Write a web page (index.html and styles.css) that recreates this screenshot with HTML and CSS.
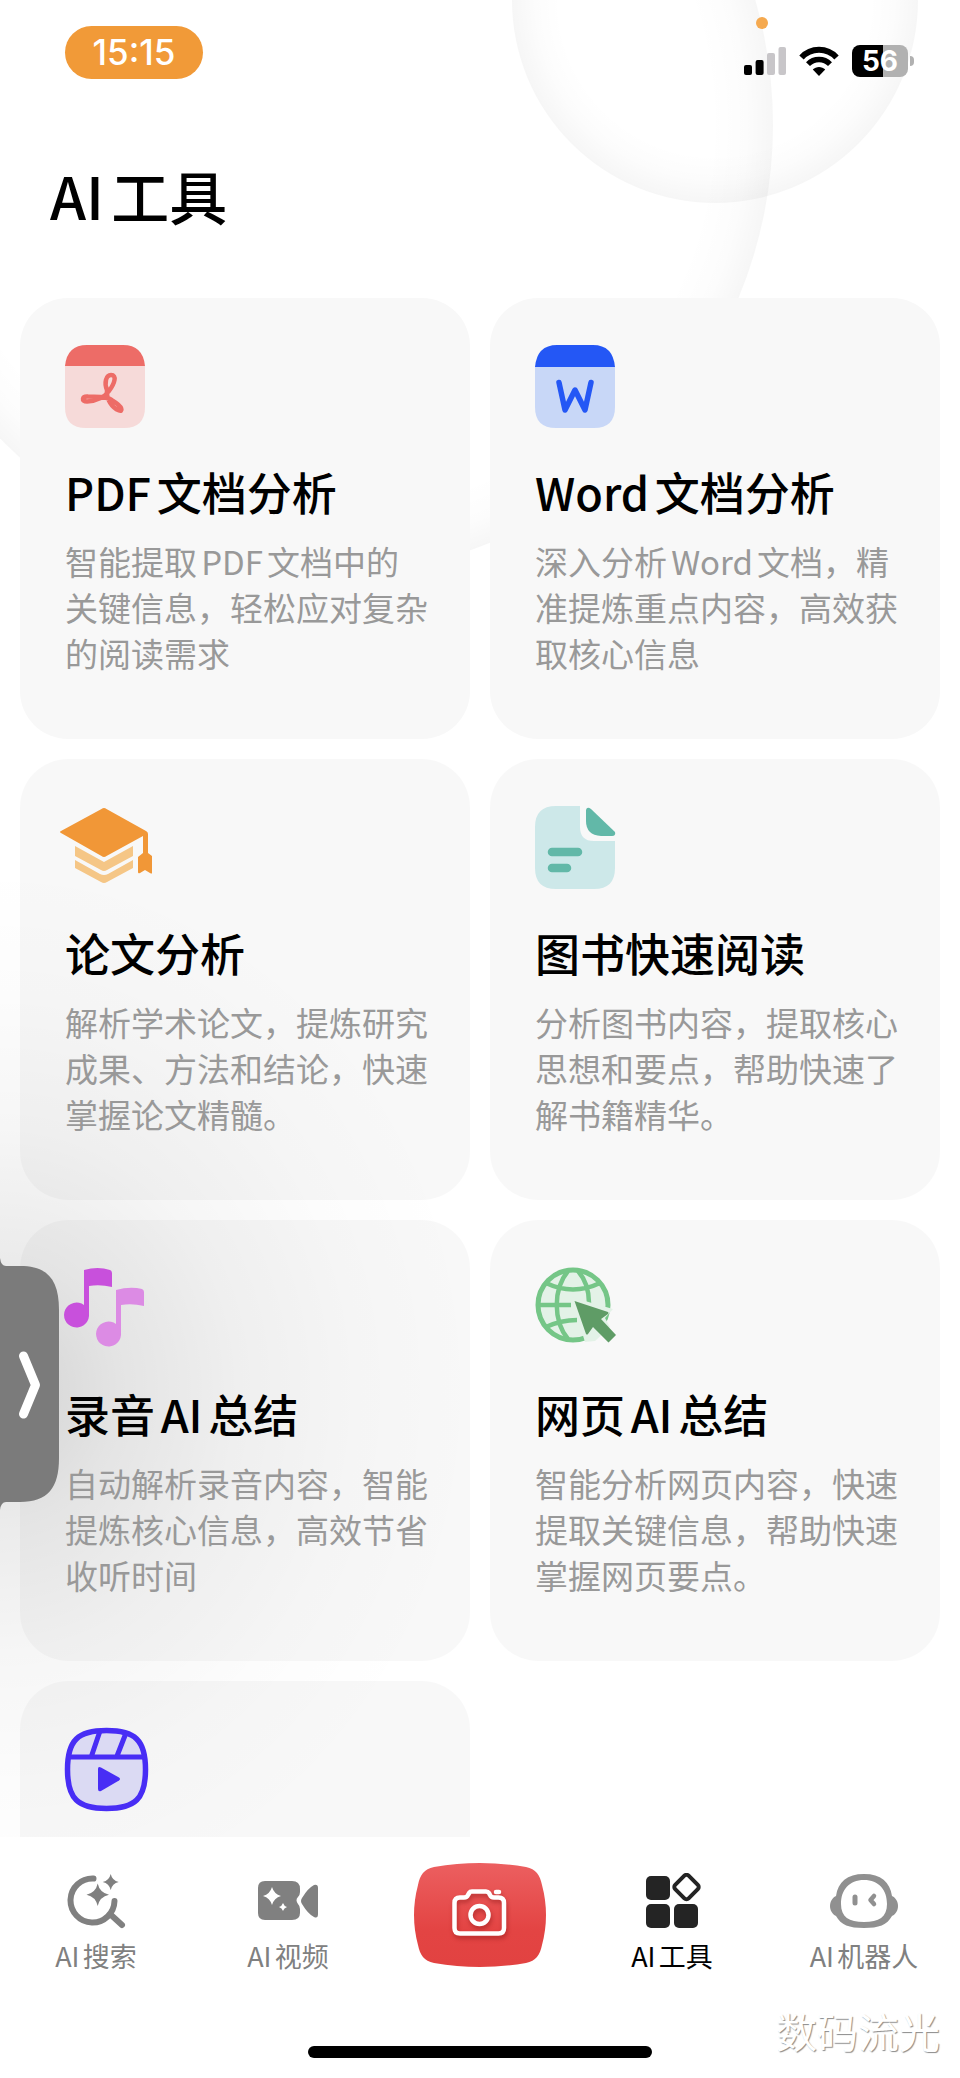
FILE: index.html
```html
<!DOCTYPE html>
<html lang="zh-CN">
<head>
<meta charset="utf-8">
<meta name="viewport" content="width=device-width, initial-scale=1">
<title>AI工具</title>
<link rel="stylesheet" href="styles.css">
</head>
<body>
<div class="app">
  <div class="orb orb-large"></div>
  <div class="orb orb-small"></div>
  <div class="glow"></div>

  <header class="header">
    <div class="status">
      <time class="clock">15:15</time>
      <div class="indicators">
        <span class="mic-dot"></span>
        <svg class="signal" width="42" height="28" viewBox="0 0 42 28" aria-hidden="true">
          <rect x="0" y="18" width="8" height="10" rx="2"/>
          <rect x="11.600" y="13" width="8" height="15" rx="2"/>
          <rect x="23" y="6" width="8" height="22" rx="2" fill="#c8c6c9"/>
          <rect x="34.500" y="0" width="7.500" height="28" rx="2" fill="#c8c6c9"/>
        </svg>
        <svg class="wifi" width="40" height="30" viewBox="0 0 40 30" aria-hidden="true">
          <path d="M2.500 11.500C12 1.200 28 1.200 37.500 11.500" fill="none" stroke="#000" stroke-width="6"/>
          <path d="M9 18.200C15 12 25 12 31 18.200" fill="none" stroke="#000" stroke-width="5.500"/>
          <path d="M13.800 23.500C17 20 23 20 26.200 23.500L20 30Z"/>
        </svg>
        <span class="battery">56</span>
      </div>
    </div>
    <h1 class="title">AI工具</h1>
  </header>

  <main class="tools">
    <a class="card" href="#">
      <svg class="icon" viewBox="0 0 84 84" aria-hidden="true">
        <path d="M0 21H80V62Q80 83 59 83H21Q0 83 0 62Z" fill="#f6dad9"/>
        <path d="M0 21Q2 0 22 0H58Q78 0 80 21Z" fill="#ed6c67"/>
        <path d="M42 45C39 38 41 30 46 30C52 30 50 38 44 46C39 53 30 56 22 56.500C16 56.500 17 51 23 51.500C33 52 43 51 48 56C58 62 58 67 54 65.500C47 63 41 54 42 45Z" fill="none" stroke="#ed6c67" stroke-width="4.500" stroke-linejoin="round"/>
      </svg>
      <h2 class="card-title">PDF文档分析</h2>
      <p class="card-text">智能提取PDF文档中的关键信息，轻松应对复杂的阅读需求</p>
    </a>
    <a class="card" href="#">
      <svg class="icon" viewBox="0 0 84 84" aria-hidden="true">
        <path d="M0 21H80V62Q80 83 59 83H21Q0 83 0 62Z" fill="#c8d7f7"/>
        <path d="M0 22Q2 0 22 0H58Q78 0 80 22Z" fill="#2457f5"/>
        <path d="M24 37.500L30 65L40 45L50 65L56 37.500" fill="none" stroke="#2457f5" stroke-width="5.500" stroke-linecap="round" stroke-linejoin="round"/>
      </svg>
      <h2 class="card-title">Word文档分析</h2>
      <p class="card-text">深入分析Word文档，精准提炼重点内容，高效获取核心信息</p>
    </a>
    <a class="card" href="#">
      <svg class="icon" viewBox="0 0 84 84" aria-hidden="true">
        <path d="M10 40L39 56L68 40V50L42 64Q39 66 36 64L10 50Z" fill="#f5c686"/>
        <path d="M10 54L35 68Q39 70 43 68L68 54V62L42 76Q39 78 36 76L10 62Z" fill="#f5c686"/>
        <path d="M36.500 3Q39 1 41.500 3L81 25Q83 26 83 28V47L87 50V67Q87 68 85 67L80 64L75 67Q73 68 73 66V51L78 47V30L41.500 50Q39 52 36.500 50L-4 27Q-6 26 -4 25Z" fill="#f19737"/>
      </svg>
      <h2 class="card-title">论文分析</h2>
      <p class="card-text">解析学术论文，提炼研究成果、方法和结论，快速掌握论文精髓。</p>
    </a>
    <a class="card" href="#">
      <svg class="icon" viewBox="0 0 84 84" aria-hidden="true">
        <path d="M21 0H45V21Q45 35 59 35H80V62Q80 83 59 83H21Q0 83 0 62V21Q0 0 21 0Z" fill="#cde8e9"/>
        <path d="M51 4Q52 0 56 3L80 26Q81 30 77 30H66Q51 29 51 15Z" fill="#62b8a8"/>
        <path d="M17 46H43M17 62H32" stroke="#62b8a8" stroke-width="8.500" stroke-linecap="round"/>
      </svg>
      <h2 class="card-title">图书快速阅读</h2>
      <p class="card-text">分析图书内容，提取核心思想和要点，帮助快速了解书籍精华。</p>
    </a>
    <a class="card" href="#">
      <svg class="icon" viewBox="0 0 84 84" aria-hidden="true">
        <path d="M19 3Q33 -1 45 3Q47 4 47 6V20Q35 17 24 19V49A12.500 12.500 0 1 1 19 38Z" fill="#c850dc"/>
        <path d="M51 23Q65 19 77 22Q79 23 79 25V39Q67 36 56 38V68A12.500 12.500 0 1 1 51 57Z" fill="#dc8be4"/>
      </svg>
      <h2 class="card-title">录音AI总结</h2>
      <p class="card-text">自动解析录音内容，智能提炼核心信息，高效节省收听时间</p>
    </a>
    <a class="card" href="#">
      <svg class="icon" viewBox="0 0 84 84" aria-hidden="true">
        <circle cx="38" cy="38" r="35" fill="#e3f2e7" stroke="#75c687" stroke-width="5"/>
        <g fill="none" stroke="#75c687" stroke-width="4.500">
          <path d="M33 4C18 22 18 54 33 72M43 4C50 12 54 24 54 36M3 38H36M11 16Q38 29 65 16M11 60Q26 53 42 53"/>
        </g>
        <path d="M36 30L78 42L70 51L75 60L60 74L50 75Z" fill="#e3f2e7"/>
        <path d="M39.500 34L73 45Q74 46 73 47L66 52L81 68L73.500 75.500L58 60L53 67Q52 68 51 67Z" fill="#5f9c66"/>
      </svg>
      <h2 class="card-title">网页AI总结</h2>
      <p class="card-text">智能分析网页内容，快速提取关键信息，帮助快速掌握网页要点。</p>
    </a>
    <a class="card" href="#">
      <svg class="icon" viewBox="0 0 84 84" aria-hidden="true">
        <path d="M41.500 2.500C70 2.500 80.500 12 80.500 41.500S70 80.500 41.500 80.500S2.500 71 2.500 41.500S13 2.500 41.500 2.500Z" fill="#dbdaf3" stroke="#482df5" stroke-width="5.500"/>
        <path d="M4 29H79M35 3L26.500 28M61 5L52 28" fill="none" stroke="#482df5" stroke-width="5"/>
        <path d="M33 41Q33 38 36 39.500L54 49.500Q56 51 54 52.500L36 63Q33 64 33 61Z" fill="#482df5"/>
      </svg>
    </a>
  </main>

  <button class="drawer" type="button" aria-label="展开">
    <svg width="60" height="252" viewBox="0 0 60 252" aria-hidden="true">
      <path d="M0 0Q1 8 6 8H20C48 8 59 22 59 52V200C59 230 48 244 20 244H6Q1 244 0 252Z" fill="#7b7b7b"/>
      <path d="M23.500 98L35.500 127L23.500 156" fill="none" stroke="#fff" stroke-width="9" stroke-linecap="round" stroke-linejoin="round"/>
    </svg>
  </button>

  <nav class="tabs">
    <a class="tab" href="#">
      <svg class="tab-icon" viewBox="0 0 68 56" aria-hidden="true">
        <path d="M31.500 5.500A22 22 0 1 0 52.500 28M48 41L60 52" fill="none" stroke="#808080" stroke-width="6" stroke-linecap="round"/>
        <path d="M35.700 10.500Q37.700 19.700 47 21.700Q37.700 23.700 35.700 33Q33.700 23.700 24.500 21.700Q33.700 19.700 35.700 10.500Z" fill="#808080"/>
        <path d="M48.700 1Q50.200 7.500 56.700 9Q50.200 10.500 48.700 17Q47.200 10.500 40.700 9Q47.200 7.500 48.700 1Z" fill="#808080"/>
      </svg>
      <span>AI搜索</span>
    </a>
    <a class="tab" href="#">
      <svg class="tab-icon" viewBox="0 0 68 56" aria-hidden="true">
        <path d="M11 8H38Q46 8 46 16V19Q46 22 44 24Q41 27 44 31Q46 33 46 36V40Q46 47 38 47H11Q4 47 4 40V15Q4 8 11 8Z" fill="#808080"/>
        <path d="M18 14Q20 21 27 23Q20 25 18 32Q16 25 9 23Q16 21 18 14ZM29 30Q30 33 33 34Q30 35 29 38Q28 35 25 34Q28 33 29 30Z" fill="#fff"/>
        <path d="M48 25Q54 15 60 12Q64 11 64 15V41Q64 46 60 44Q54 41 48 31Q46 28 48 25Z" fill="#808080"/>
      </svg>
      <span>AI视频</span>
    </a>
    <button class="shutter" type="button" aria-label="拍照">
      <svg width="132" height="104" viewBox="0 0 132 104" aria-hidden="true">
        <defs>
          <linearGradient id="red" x1="0" y1="0" x2="0" y2="1">
            <stop offset="0" stop-color="#ec5f60"/>
            <stop offset="0.650" stop-color="#e34443"/>
            <stop offset="1" stop-color="#e24241"/>
          </linearGradient>
        </defs>
        <path d="M20 4Q66 -4 112 4C122 6 126 12 128 22Q136 52 128 82C126 92 122 98 112 100Q66 108 20 100C10 98 6 92 4 82Q-4 52 4 22C6 12 10 6 20 4Z" fill="url(#red)"/>
        <g class="camera" fill="none" stroke="#fff" stroke-width="4.500" stroke-linecap="round" stroke-linejoin="round">
          <path d="M46 34.500H50Q53 34.500 54 32L55.500 29.500Q56 28.500 58 28.500H72Q74 28.500 75 30L76 32Q77 34.500 80 34.500H84.500Q90 34.500 90 40V65Q90 70.500 84.500 70.500H46Q40.500 70.500 40.500 65V40Q40.500 34.500 46 34.500ZM82 29H85"/>
          <circle cx="65.500" cy="52" r="9"/>
        </g>
      </svg>
    </button>
    <a class="tab tab-active" href="#" aria-current="page">
      <svg class="tab-icon" viewBox="0 0 68 56" aria-hidden="true">
        <g fill="#242424">
          <rect x="8" y="3" width="24" height="24" rx="5"/>
          <rect x="8" y="31" width="24" height="24" rx="5"/>
          <rect x="36" y="31" width="24" height="24" rx="5"/>
        </g>
        <rect x="39" y="4.500" width="19" height="19" rx="3" transform="rotate(45 48.500 14)" fill="none" stroke="#242424" stroke-width="4"/>
      </svg>
      <span>AI工具</span>
    </a>
    <a class="tab" href="#">
      <svg class="tab-icon" viewBox="0 0 68 56" aria-hidden="true">
        <path fill-rule="evenodd" d="M34 1C51 1 60 9 62 23C70 27 70 39 62 43C57 52 49 55 34 55S11 52 6 43C-2 39 -2 27 6 23C8 9 17 1 34 1ZM34 7C19 7 11 17 11 31C11 44 19 49 34 49S57 44 57 31C57 17 49 7 34 7Z" fill="#909090"/>
        <path d="M25 24V30" stroke="#909090" stroke-width="5" stroke-linecap="round"/>
        <path d="M44 23L40.500 27L44 31" fill="none" stroke="#909090" stroke-width="4.500" stroke-linecap="round" stroke-linejoin="round"/>
      </svg>
      <span>AI机器人</span>
    </a>
  </nav>
  <footer class="footer">
    <div class="home-bar"></div>
    <span class="watermark">数码流光</span>
  </footer>
</div>
</body>
</html>
```
FILE: styles.css
```css
* {
  box-sizing: border-box;
}

body {
  margin: 0;
  background: #fff;
  color: #000;
  font-family: "Noto Sans CJK SC", "Noto Sans", sans-serif;
  text-autospace: normal;
}

a {
  color: inherit;
  text-decoration: none;
}

button {
  padding: 0;
  border: 0;
  background: none;
  cursor: pointer;
}

svg {
  display: block;
}

.app {
  position: relative;
  display: flex;
  flex-direction: column;
  height: 100vh;
  overflow: hidden;
}

/* Soft bubbles behind the page */
.orb {
  position: absolute;
  border-radius: 50%;
}

.orb-large {
  left: -127px;
  top: -325px;
  width: 900px;
  height: 900px;
  background: radial-gradient(circle closest-side, rgba(0, 0, 0, 0) 86%, rgba(0, 0, 0, 0.012) 94%, rgba(0, 0, 0, 0.035) 100%);
}

.orb-small {
  left: 512px;
  top: -203px;
  width: 406px;
  height: 406px;
  background: radial-gradient(circle closest-side, rgba(0, 0, 0, 0) 76%, rgba(0, 0, 0, 0.012) 88%, rgba(0, 0, 0, 0.035) 100%);
}

/* Shadow cast by the side drawer */
.glow {
  position: absolute;
  left: 0;
  top: 860px;
  width: 480px;
  height: 1060px;
  background: radial-gradient(ellipse farthest-side at 0 50%, rgba(0, 0, 0, 0.15), rgba(0, 0, 0, 0.08) 25%, rgba(0, 0, 0, 0.035) 50%, rgba(0, 0, 0, 0.012) 75%, rgba(0, 0, 0, 0));
  pointer-events: none;
}

.header {
  position: relative;
  flex: none;
  padding: 26px 46px 68px 50px;
}

.status {
  display: flex;
  justify-content: space-between;
  align-items: flex-start;
  margin-bottom: 81px;
}

.clock {
  width: 138px;
  margin-left: 15px;
  border-radius: 27px;
  background: #f19a38;
  color: #fff;
  font: 500 35px/53px Inter, sans-serif;
  text-align: center;
}

.indicators {
  position: relative;
  display: flex;
  align-items: center;
  gap: 13px;
  padding-top: 19px;
}

.mic-dot {
  position: absolute;
  left: 12px;
  top: -9px;
  width: 12px;
  height: 12px;
  border-radius: 50%;
  background: #f5a94f;
}

.battery {
  position: relative;
  width: 56px;
  margin-right: 6px;
  border-radius: 8px;
  background: linear-gradient(90deg, #000 56%, #b1b1b1 56%);
  color: #fff;
  font: 700 28px/32px Inter, sans-serif;
  text-align: center;
}

.battery::after {
  content: "";
  position: absolute;
  right: -6px;
  top: 11px;
  width: 4px;
  height: 10px;
  border-radius: 0 4px 4px 0;
  background: #b1b1b1;
}

.title {
  margin: 0;
  font-size: 58px;
  font-weight: 500;
  line-height: 70px;
}

.tools {
  position: relative;
  flex: 1;
  min-height: 0;
  display: grid;
  grid-template-columns: 1fr 1fr;
  grid-auto-rows: max-content;
  gap: 20px;
  padding: 0 20px;
  overflow-y: auto;
  scrollbar-width: none;
}

.card {
  min-height: 441px;
  padding: 47px 39px 40px 45px;
  border-radius: 48px;
  background: #f8f8f8;
}

/* The drawer's shadow shows through the cards further down */
.card:nth-child(n + 3) {
  background: rgba(0, 0, 0, 0.028);
}

.icon {
  width: 84px;
  height: 84px;
  overflow: visible;
}

.card-title {
  margin: 33px 0 16px;
  font-size: 45px;
  font-weight: 500;
  line-height: 60px;
}

.card-text {
  margin: 0;
  color: #999;
  font-size: 33px;
  line-height: 46px;
}

.drawer {
  position: absolute;
  left: 0;
  top: 1258px;
}

.tabs {
  position: relative;
  flex: none;
  display: grid;
  grid-template-columns: repeat(5, 1fr);
  justify-items: center;
  align-items: start;
  padding-top: 26px;
  background: rgba(255, 255, 255, 0.85);
}

.tab {
  display: flex;
  flex-direction: column;
  align-items: center;
  gap: 7px;
  padding-top: 10px;
  color: #808080;
  font-size: 27px;
  line-height: 40px;
}

.tab-active {
  color: #000;
}

.tab-icon {
  width: 68px;
  height: 56px;
}

.camera {
  filter: drop-shadow(1px 3px 2px rgba(120, 10, 10, 0.4));
}

.footer {
  position: relative;
  flex: none;
  display: flex;
  justify-content: center;
  padding: 70px 0 20px;
  background: #fff;
}

.home-bar {
  width: 36%;
  max-width: 344px;
  height: 12px;
  border-radius: 6px;
  background: #000;
}

.watermark {
  position: absolute;
  right: 20px;
  bottom: 24px;
  color: #fff;
  font-size: 41px;
  line-height: 48px;
  text-shadow: 1px 1px 1px #8a8a8a;
}
```
